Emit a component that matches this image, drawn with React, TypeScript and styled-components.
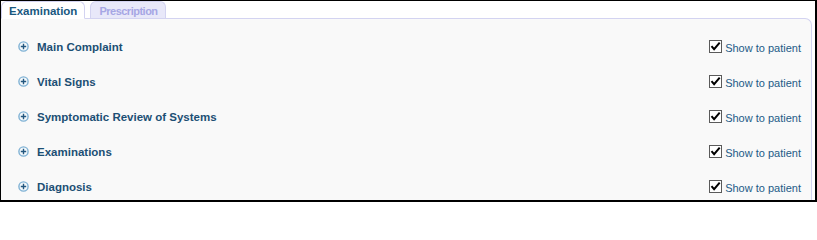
import styled, { createGlobalStyle } from 'styled-components'

const GlobalStyle = createGlobalStyle`
	html,
	body {
		margin: 0;
		background: #ffffff;
	}

	body {
		font-family: 'Liberation Sans', Arial, sans-serif;
	}
`

const sections = [
	'Main Complaint',
	'Vital Signs',
	'Symptomatic Review of Systems',
	'Examinations',
	'Diagnosis',
]

const Frame = styled.div`
	border: 2px solid #000000;
	border-left-width: 1px;
	border-top-width: 1px;
	box-sizing: border-box;
	display: flex;
	flex-direction: column;
	height: 202px;
	overflow: hidden;
	width: 817px;
`

const TabBar = styled.div`
	align-items: flex-end;
	display: flex;
	gap: 5px;
	height: 20px;
	position: relative;
	z-index: 1;
`

const Tab = styled.div<{ $active?: boolean }>`
	align-items: center;
	background: ${({ $active }) => ($active ? '#ffffff' : '#e8e8f9')};
	border: 1px solid #d3d3f1;
	border-bottom: ${({ $active }) => ($active ? '1px solid #ffffff' : '0')};
	border-radius: 6px 6px 0 0;
	box-sizing: border-box;
	color: ${({ $active }) => ($active ? '#19587f' : '#a6a6e4')};
	display: flex;
	font-size: ${({ $active }) => ($active ? '11.5px' : '11px')};
	font-weight: 700;
	height: ${({ $active }) => ($active ? '18px' : '17px')};
	letter-spacing: ${({ $active }) => ($active ? '0' : '-0.5px')};
	margin-bottom: ${({ $active }) => ($active ? '-1px' : '0')};
	padding: 2px 7px 0 ${({ $active }) => ($active ? '7px' : '8px')};
`

const Panel = styled.div`
	background: #f9f9f9;
	border-right: 1px solid #d3d3f1;
	border-top: 1px solid #d3d3f1;
	border-top-right-radius: 7px;
	display: flex;
	flex: 1;
	flex-direction: column;
	margin-right: 3px;
	padding: 10px 10px 0 17px;
`

const Row = styled.div`
	align-items: center;
	display: flex;
	flex-shrink: 0;
	height: 35px;
`

const Expander = styled.svg`
	flex-shrink: 0;
	height: 11px;
	margin-right: 8px;
	width: 11px;
`

const Label = styled.span`
	color: #1c4f74;
	font-size: 11.5px;
	font-weight: 700;
`

const Visibility = styled.label`
	align-items: center;
	display: flex;
	gap: 3px;
	margin-left: auto;
`

const Box = styled.span`
	align-items: center;
	background: #ffffff;
	border: 1px solid #5a5a5a;
	box-sizing: border-box;
	display: flex;
	height: 13px;
	justify-content: center;
	width: 13px;
`

const Caption = styled.span`
	color: #1d5b87;
	font-size: 11px;
	padding-top: 3px;
`

const PlusIcon = () => (
	<Expander viewBox="0 0 11 11">
		<circle cx="5.5" cy="5.5" r="4.6" fill="#f4f9fc" stroke="#7fb1d4" strokeWidth="1.4" />
		<path d="M2.8 5.5h5.4M5.5 2.8v5.4" stroke="#24577f" strokeWidth="1.4" />
	</Expander>
)

const Check = () => (
	<svg width="11" height="11" viewBox="0 0 11 11">
		<path d="M1.5 5.2l2.6 3 5.6-6.6" fill="none" stroke="#000000" strokeWidth="2" />
	</svg>
)

const App = (): JSX.Element => {
	return (
		<>
			<GlobalStyle />
			<Frame>
				<TabBar>
					<Tab $active>Examination</Tab>
					<Tab>Prescription</Tab>
				</TabBar>
				<Panel>
					{sections.map((name) => (
						<Row key={name}>
							<PlusIcon />
							<Label>{name}</Label>
							<Visibility>
								<Box>
									<Check />
								</Box>
								<Caption>Show to patient</Caption>
							</Visibility>
						</Row>
					))}
				</Panel>
			</Frame>
		</>
	)
}

export default App
